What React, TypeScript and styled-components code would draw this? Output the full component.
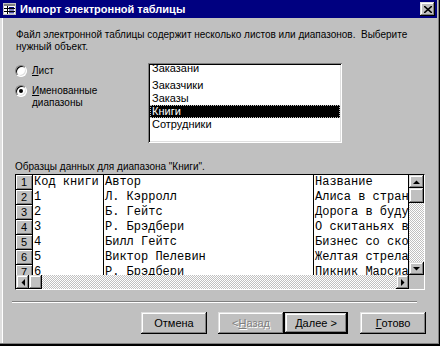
import styled, { createGlobalStyle } from 'styled-components'

const Global = createGlobalStyle`
  html, body { margin: 0; padding: 0; background: #c0c0c0; }
  body { font-family: "Liberation Sans", Arial, sans-serif; }
`;

const raised = `
  background: #c0c0c0;
  box-shadow: inset -1px -1px #000, inset 1px 1px #dfdfdf, inset -2px -2px #808080, inset 2px 2px #fff;
`;

const Window = styled.div`
  width: 440px;
  height: 346px;
  box-sizing: border-box;
  background: #c0c0c0;
  border-right: 1px solid #000;
  border-bottom: 2px solid #000;
  box-shadow: inset -1px -1px 0 #808080;
  padding: 0 2px 1px 0;
  display: flex;
  flex-direction: column;
  font-family: "Liberation Sans", Arial, sans-serif;
  font-size: 11px;
  color: #000;
  overflow: hidden;
`;

const TitleBar = styled.div`
  height: 18px;
  flex: none;
  background: #000080;
  display: flex;
  align-items: center;
  padding: 0 2px 0 3px;
  color: #fff;
  font-weight: bold;
  font-size: 11px;
`;

const TitleText = styled.span`
  flex: 1;
  margin-left: 4px;
  white-space: nowrap;
`;

const CloseBtn = styled.div`
  ${raised}
  width: 15px;
  height: 14px;
  display: flex;
  align-items: center;
  justify-content: center;
`;

const Body = styled.div`
  flex: 1;
  border-left: 2px solid #dfdfdf;
  box-shadow: inset 1px 0 #fff;
  padding: 0 12px 0 13px;
  display: flex;
  flex-direction: column;
  font-size: 10px;
`;

const Intro = styled.div`
  margin: 11px 0 0 1px;
  line-height: 12px;
  white-space: nowrap;
`;

const Options = styled.div`
  display: flex;
  margin-top: 10px;
`;

const RadioGroup = styled.div`
  width: 133px;
  display: flex;
  flex-direction: column;
`;

const RadioRow = styled.label<{ $gap: number }>`
  display: flex;
  align-items: flex-start;
  gap: 5px;
  margin-top: ${p => p.$gap}px;
  line-height: 12px;
`;

const RadioDot = styled.span<{ $on?: boolean }>`
  position: relative;
  width: 12px;
  height: 12px;
  flex: none;
  box-sizing: border-box;
  border-radius: 50%;
  background: #fff;
  border: 1px solid;
  border-color: #808080 #fff #fff #808080;
  box-shadow: inset 1px 1px #000, inset -1px -1px #dfdfdf;
  &::after {
    content: '';
    display: ${p => (p.$on ? 'block' : 'none')};
    position: absolute;
    left: 3px;
    top: 3px;
    width: 4px;
    height: 4px;
    border-radius: 50%;
    background: #000;
  }
`;

const ListBox = styled.div`
  width: 194px;
  height: 80px;
  box-sizing: border-box;
  background: #fff;
  box-shadow: inset 1px 1px #808080, inset -1px -1px #fff, inset 2px 2px #000, inset -2px -2px #dfdfdf;
  padding: 0 2px 2px;
  overflow: hidden;
  font-size: 11px;
`;

const ListItem = styled.div<{ $sel?: boolean; $cut?: boolean }>`
  height: ${p => (p.$cut ? '16px' : '13px')};
  line-height: ${p => (p.$cut ? '11px' : '13px')};
  padding-left: 2px;
  white-space: nowrap;
  overflow: ${p => (p.$cut ? 'visible' : 'hidden')};
  background: ${p => (p.$sel ? '#000' : 'transparent')};
  color: ${p => (p.$sel ? '#fff' : '#000')};
  outline: ${p => (p.$sel ? '1px dotted #c0c0c0' : 'none')};
  outline-offset: -1px;
`;

const SampleLabel = styled.div`
  margin-top: 18px;
  line-height: 12px;
  white-space: nowrap;
`;

const DataGrid = styled.div`
  margin-top: 1px;
  width: 410px;
  height: 116px;
  box-sizing: border-box;
  border: 1px solid;
  border-color: #000 #fff #fff #000;
  display: grid;
  grid-template-columns: 1fr 15px;
  grid-template-rows: 1fr 14px;
`;

const Sheet = styled.div`
  background: #fff;
  overflow: hidden;
`;

const SheetRow = styled.div`
  display: grid;
  grid-template-columns: 17px 71px 210px 95px;
  height: 15px;
`;

const RowNum = styled.div`
  box-sizing: border-box;
  background: #c0c0c0;
  border-right: 1px solid #000;
  border-bottom: 1px solid #000;
  box-shadow: inset 1px 1px #fff, inset -1px -1px #808080;
  text-align: center;
  line-height: 14px;
  font-size: 11px;
`;

const Cell = styled.div`
  box-sizing: border-box;
  border-right: 1px solid #000;
  padding-left: 1px;
  font-family: "Liberation Mono", "Courier New", monospace;
  font-size: 12px;
  line-height: 15px;
  white-space: nowrap;
  overflow: hidden;
`;

const Track = styled.div<{ $dir: 'v' | 'h' }>`
  display: flex;
  flex-direction: ${p => (p.$dir === 'v' ? 'column' : 'row')};
  background-color: #c0c0c0;
  background-image: repeating-conic-gradient(#fff 0 25%, #c0c0c0 0 50%);
  background-size: 2px 2px;
`;

const ScrollBtn = styled.div<{ $w: number; $h: number; $end?: boolean }>`
  ${raised}
  flex: none;
  width: ${p => p.$w}px;
  height: ${p => p.$h}px;
  display: flex;
  align-items: center;
  justify-content: center;
  margin-left: ${p => (p.$end ? 'auto' : '0')};
`;

const EndSpacer = styled.div`
  flex: 1;
`;

const Corner = styled.div`
  background: #c0c0c0;
`;

const Separator = styled.div`
  margin: 11px 8px 0 -3px;
  height: 0;
  border-top: 1px solid #808080;
  border-bottom: 1px solid #fff;
`;

const Buttons = styled.div`
  display: flex;
  justify-content: flex-end;
  margin: 9px -1px 0 0;
`;

const PushBtn = styled.div<{ $gap: number; $default?: boolean; $disabled?: boolean }>`
  ${raised}
  width: ${p => (p.$default ? 64 : 66)}px;
  height: 22px;
  box-sizing: border-box;
  margin-left: ${p => p.$gap}px;
  display: flex;
  align-items: center;
  justify-content: center;
  font-size: 11px;
  color: ${p => (p.$disabled ? '#808080' : '#000')};
  text-shadow: ${p => (p.$disabled ? '1px 1px #fff' : 'none')};
  border: ${p => (p.$default ? '1px solid #000' : 'none')};
`;

const Arrow = ({ dir }: { dir: 'up' | 'down' | 'left' | 'right' }) => {
  const pts = {
    up: '0,4 7,4 3.5,0.5',
    down: '0,0 7,0 3.5,3.5',
    left: '4,0 4,7 0.5,3.5',
    right: '0,0 0,7 3.5,3.5',
  }[dir];
  const v = dir === 'up' || dir === 'down';
  return (
    <svg width={v ? 7 : 4} height={v ? 4 : 7} viewBox={v ? '0 0 7 4' : '0 0 4 7'}>
      <polygon points={pts} fill="#000" />
    </svg>
  );
};

const SheetIcon = () => (
  <svg width="13" height="12" viewBox="0 0 13 12">
    <rect x="0.5" y="0.5" width="12" height="11" fill="#fff" stroke="#c0c0c0" />
    <rect x="1" y="1" width="11" height="2" fill="#808080" />
    <path d="M1 5.5h11M1 8.5h11M4.5 3v8" stroke="#000" strokeWidth="1" />
    <path d="M6 4.5h5M6 7h5M6 9.8h5" stroke="#000080" strokeWidth="1" />
  </svg>
);

const rows = [
  ['Код книги', 'Автор', 'Название'],
  ['1', 'Л. Кэрролл', 'Алиса в стране чудес'],
  ['2', 'Б. Гейтс', 'Дорога в будущее'],
  ['3', 'Р. Брэдбери', 'О скитаньях вечных и о Земле'],
  ['4', 'Билл Гейтс', 'Бизнес со скоростью мысли'],
  ['5', 'Виктор Пелевин', 'Желтая стрела'],
  ['6', 'Р. Брэдбери', 'Пикник Марсиане'],
];

const ranges = ['Заказани', 'Заказчики', 'Заказы', 'Книги', 'Сотрудники'];

export default function App() {
  return (
    <>
      <Global />
      <Window>
        <TitleBar>
          <SheetIcon />
          <TitleText>Импорт электронной таблицы</TitleText>
          <CloseBtn>
            <svg width="8" height="7" viewBox="0 0 8 7">
              <path d="M0 0l8 7M8 0l-8 7" stroke="#000" strokeWidth="1.6" />
            </svg>
          </CloseBtn>
        </TitleBar>
        <Body>
          <Intro>
            Файл электронной таблицы содержит несколько листов или диапазонов.&nbsp; Выберите
            <br />
            нужный объект.
          </Intro>
          <Options>
            <RadioGroup>
              <RadioRow $gap={2}>
                <RadioDot />
                <span><u>Л</u>ист</span>
              </RadioRow>
              <RadioRow $gap={8}>
                <RadioDot $on />
                <span><u>И</u>менованные<br />диапазоны</span>
              </RadioRow>
            </RadioGroup>
            <ListBox>
              {ranges.map((r, i) => (
                <ListItem key={r} $cut={i === 0} $sel={r === 'Книги'}>{r}</ListItem>
              ))}
            </ListBox>
          </Options>
          <SampleLabel>Образцы данных для диапазона "Книги".</SampleLabel>
          <DataGrid>
            <Sheet>
              {rows.map((r, i) => (
                <SheetRow key={i}>
                  <RowNum>{i + 1}</RowNum>
                  {r.map((c, j) => (
                    <Cell key={j}>{c}</Cell>
                  ))}
                </SheetRow>
              ))}
            </Sheet>
            <Track $dir="v">
              <ScrollBtn $w={15} $h={13}><Arrow dir="up" /></ScrollBtn>
              <ScrollBtn $w={15} $h={15} />
              <EndSpacer />
              <ScrollBtn $w={15} $h={13}><Arrow dir="down" /></ScrollBtn>
            </Track>
            <Track $dir="h">
              <ScrollBtn $w={13} $h={14}><Arrow dir="left" /></ScrollBtn>
              <ScrollBtn $w={13} $h={14} />
              <ScrollBtn $w={13} $h={14} $end><Arrow dir="right" /></ScrollBtn>
            </Track>
            <Corner />
          </DataGrid>
          <Separator />
          <Buttons>
            <PushBtn $gap={0}>Отмена</PushBtn>
            <PushBtn $gap={11} $disabled>&lt; <u>Н</u>азад</PushBtn>
            <PushBtn $gap={0} $default><u>Д</u>алее &gt;</PushBtn>
            <PushBtn $gap={12}><u>Г</u>отово</PushBtn>
          </Buttons>
        </Body>
      </Window>
    </>
  );
}
